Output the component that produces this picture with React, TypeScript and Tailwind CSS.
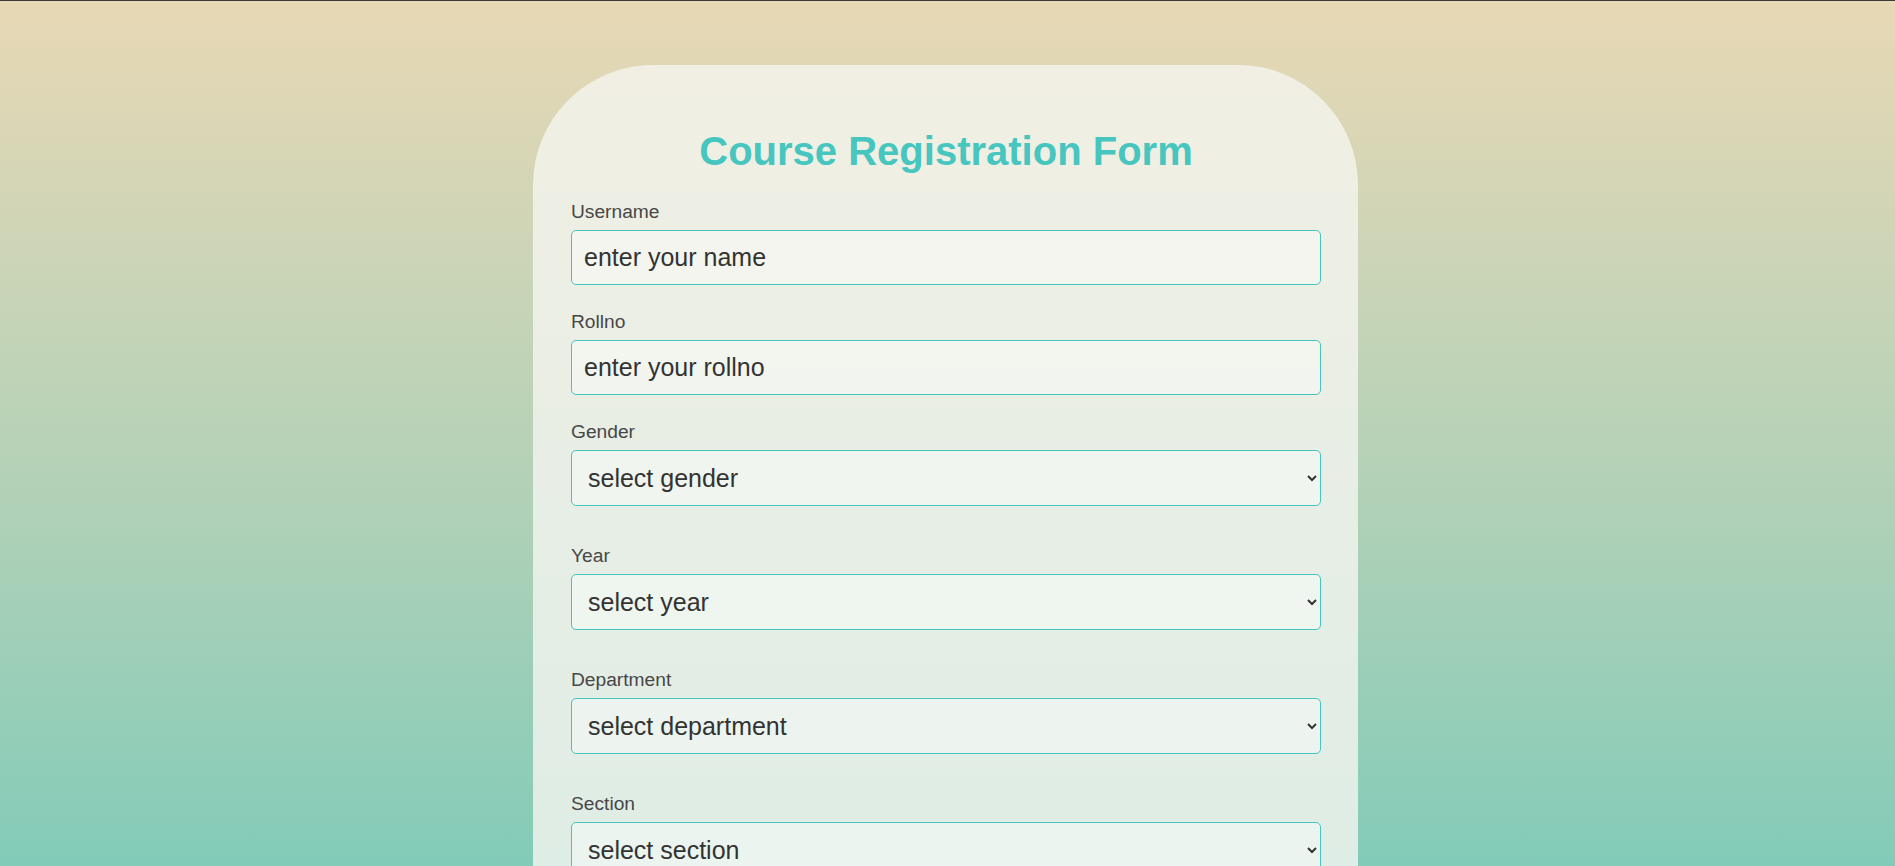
import React from 'react';

const labelCls = "block text-[19.2px] leading-[22px] text-[#474747] mb-[7px]";
const inputCls =
	"block w-full h-[55px] px-[12px] text-[25px] text-[#333] placeholder:text-[#333] bg-white/40 border border-[#45c4c0] rounded-[5px] outline-none mb-[26px]";
const selectCls =
	"block w-full h-[56px] px-[12px] text-[25px] text-[#333] bg-white/40 border border-[#45c4c0] rounded-[5px] outline-none mb-[39px]";

const App: React.FC = () => {
	return (
		<div className="min-h-screen w-full border-t border-[#3a3a3a] bg-fixed bg-linear-to-b from-[#e8d8b5] to-[#82cbb8] font-['Liberation_Sans',Arial,sans-serif] pt-[64px] pr-[4px] pb-16">
			<form className="mx-auto w-[825px] rounded-[120px] bg-[rgba(245,245,240,0.8)] pl-[38px] pr-[37px] pt-[63px] pb-[100px]">
				<h1 className="text-center text-[40px] leading-[46px] font-bold text-[#47c6c0] mb-[27px]">
					Course Registration Form
				</h1>

				<label className={labelCls}>Username</label>
				<input className={inputCls} type="text" placeholder="enter your name" />

				<label className={labelCls}>Rollno</label>
				<input className={inputCls} type="text" placeholder="enter your rollno" />

				<label className={labelCls}>Gender</label>
				<select className={selectCls} defaultValue="">
					<option value="">select gender</option>
					<option>Male</option>
					<option>Female</option>
				</select>

				<label className={labelCls}>Year</label>
				<select className={selectCls} defaultValue="">
					<option value="">select year</option>
					<option>I</option>
					<option>II</option>
					<option>III</option>
					<option>IV</option>
				</select>

				<label className={labelCls}>Department</label>
				<select className={selectCls} defaultValue="">
					<option value="">select department</option>
					<option>CSE</option>
					<option>ECE</option>
					<option>EEE</option>
					<option>MECH</option>
				</select>

				<label className={labelCls}>Section</label>
				<select className={selectCls} defaultValue="">
					<option value="">select section</option>
					<option>A</option>
					<option>B</option>
					<option>C</option>
				</select>

				<button
					type="submit"
					className="block mx-auto px-10 py-3 text-[22px] text-white bg-[#47c6c0] rounded-[5px]"
				>
					Submit
				</button>
			</form>
		</div>
	);
};

export default App;
